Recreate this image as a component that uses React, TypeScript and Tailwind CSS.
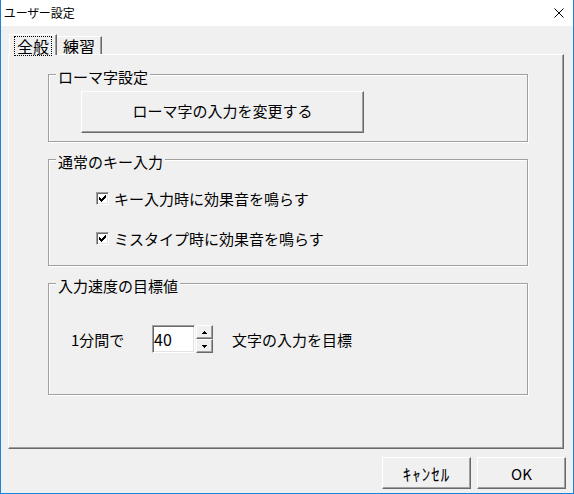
import type { ReactNode } from 'react'

const raised =
  'border border-t-white border-l-white border-r-[#696969] border-b-[#696969] shadow-[inset_-1px_-1px_0_#a0a0a0] bg-[#f0f0f0]'

function GroupBox({ label, height, children }: { label: string; height: string; children?: ReactNode }) {
  return (
    <div
      className={`w-[480px] ${height} border border-[#a0a0a0] shadow-[1px_1px_0_#fff,inset_1px_1px_0_#fff] flex flex-col items-start`}
    >
      <span className="-mt-[6px] ml-[7px] px-[2px] bg-[#f0f0f0] text-[15px] leading-[15px]">{label}</span>
      {children}
    </div>
  )
}

function CheckBox({ label }: { label: string }) {
  return (
    <div className="flex items-center gap-[5px] ml-[47px] h-[16px]">
      <div className="w-[13px] h-[13px] bg-white border border-t-[#a0a0a0] border-l-[#a0a0a0] border-r-white border-b-white shadow-[inset_1px_1px_0_#696969,inset_-1px_-1px_0_#e3e3e3] flex items-center justify-center">
        <svg width="7" height="7" viewBox="0 0 7 7" shapeRendering="crispEdges">
          <path d="M0 2h1v1h1v1h1v-1h1v-1h1v-1h1v-1h1v3h-1v1h-1v1h-1v1h-1v1h-1v-1h-1v-1h-1z" fill="#000" />
        </svg>
      </div>
      <span className="text-[15px] leading-[15px]">{label}</span>
    </div>
  )
}

function Arrow({ up }: { up?: boolean }) {
  return (
    <svg width="5" height="3" viewBox="0 0 5 3" shapeRendering="crispEdges">
      <path d={up ? 'M2 0h1v1h1v1h1v1h-5v-1h1v-1h1z' : 'M0 0h5v1h-1v1h-1v1h-1v-1h-1v-1h-1z'} fill="#000" />
    </svg>
  )
}

export default function App() {
  return (
    <div className="w-[574px] h-[494px] flex flex-col border-x border-b border-[#1883d7] bg-[#f0f0f0] text-black font-['Noto_Sans_CJK_JP',sans-serif] overflow-hidden">
      {/* Title bar */}
      <div className="h-[26px] shrink-0 bg-white flex items-center justify-between pl-[3px] pr-[9px]">
        <span className="-mt-[1px] text-[12px] leading-[12px] [font-feature-settings:'palt']">ユーザー設定</span>
        <svg width="10" height="10" viewBox="0 0 10 10">
          <path d="M0.5 0.5L9.5 9.5M9.5 0.5L0.5 9.5" stroke="#000" strokeWidth="1" />
        </svg>
      </div>

      {/* Body */}
      <div className="flex-1 flex flex-col px-[7px] pt-[8px]">
        {/* Tabs */}
        <div className="flex items-end h-[20px] pl-[1px]">
          <div className="relative z-10 -mb-[1px] w-[48px] h-[21px] bg-[#f0f0f0] border-t border-l border-t-white border-l-white border-r border-r-[#696969] shadow-[inset_-1px_0_0_#a0a0a0] flex items-start justify-center pt-[1px]">
            <span className="border border-dotted border-black px-[2px] text-[16px] leading-[16px] pt-[1px] pb-[1px]">全般</span>
          </div>
          <div className="w-[45px] h-[18px] border-t border-t-white border-r border-r-[#696969] shadow-[inset_-1px_0_0_#a0a0a0] flex items-center justify-center">
            <span className="text-[16px] leading-[16px]">練習</span>
          </div>
        </div>

        {/* Tab panel */}
        <div className="w-[556px] h-[395px] border border-t-white border-l-white border-r-[#696969] border-b-[#696969] shadow-[inset_-1px_-1px_0_#a0a0a0] pl-[39px] pt-[19px] flex flex-col">
          <GroupBox label="ローマ字設定" height="h-[68px]">
            <button className={`${raised} mt-[7px] ml-[32px] w-[283px] h-[42px] text-[15px] leading-[15px] pb-[3px]`}>
              ローマ字の入力を変更する
            </button>
          </GroupBox>

          <div className="mt-[17px]">
            <GroupBox label="通常のキー入力" height="h-[107px]">
              <div className="mt-[21px]">
                <CheckBox label="キー入力時に効果音を鳴らす" />
              </div>
              <div className="mt-[24px]">
                <CheckBox label="ミスタイプ時に効果音を鳴らす" />
              </div>
            </GroupBox>
          </div>

          <div className="mt-[17px]">
            <GroupBox label="入力速度の目標値" height="h-[112px]">
              <div className="mt-[32px] ml-[22px] flex items-center">
                <span className="w-[81px] text-[15px] leading-[15px]">1分間で</span>
                <div className="w-[43px] h-[28px] bg-white border border-t-[#a0a0a0] border-l-[#a0a0a0] border-r-white border-b-white shadow-[inset_1px_1px_0_#696969,inset_-1px_-1px_0_#e3e3e3] flex items-center pl-[1px]">
                  <span className="text-[16px] leading-[16px]">40</span>
                </div>
                <div className="ml-[1px] w-[17px] h-[28px] flex flex-col">
                  <div className={`${raised} h-[14px] flex items-center justify-center`}>
                    <Arrow up />
                  </div>
                  <div className={`${raised} h-[14px] flex items-center justify-center`}>
                    <Arrow />
                  </div>
                </div>
                <span className="ml-[19px] text-[15px] leading-[15px]">文字の入力を目標</span>
              </div>
            </GroupBox>
          </div>
        </div>

        {/* Footer */}
        <div className="flex justify-end gap-[6px] mt-[8px]">
          <button className={`${raised} w-[89px] h-[32px] text-[17px] leading-[17px] tracking-[1px]`}>ｷｬﾝｾﾙ</button>
          <button className={`${raised} w-[89px] h-[32px] text-[15px] leading-[15px]`}>OK</button>
        </div>
      </div>
    </div>
  )
}
